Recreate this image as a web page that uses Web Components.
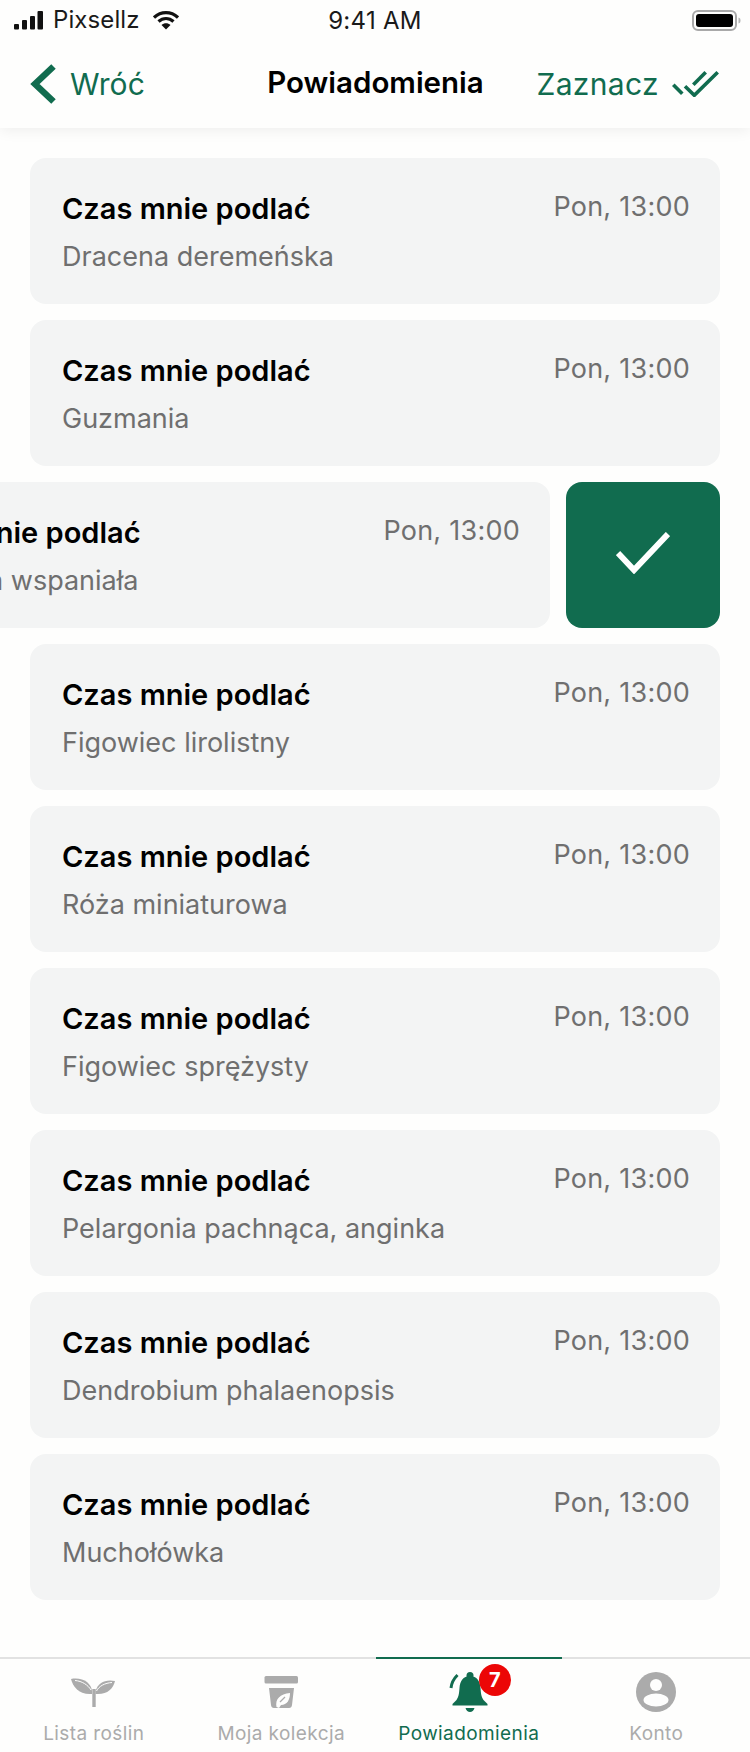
<!DOCTYPE html>
<html><head><meta charset="utf-8"><style>
html,body{margin:0;padding:0}
body{width:750px;height:1752px;overflow:hidden;background:#fefefd;font-family:Inter,sans-serif}
</style></head><body>
<app-screen>
<status-bar slot="top"></status-bar>
<nav-bar slot="top"></nav-bar>
<notice-card name="Dracena deremeńska"></notice-card>
<notice-card name="Guzmania"></notice-card>
<notice-card name="Bromelia wspaniała" swiped></notice-card>
<notice-card name="Figowiec lirolistny"></notice-card>
<notice-card name="Róża miniaturowa"></notice-card>
<notice-card name="Figowiec sprężysty"></notice-card>
<notice-card name="Pelargonia pachnąca, anginka"></notice-card>
<notice-card name="Dendrobium phalaenopsis"></notice-card>
<notice-card name="Muchołówka"></notice-card>
<tab-bar slot="bottom"></tab-bar>
</app-screen>
<script>
function def(name,html,init){customElements.define(name,class extends HTMLElement{constructor(){super();this.attachShadow({mode:'open'}).innerHTML=html;}connectedCallback(){if(init)init.call(this,this.shadowRoot);}});}
const G='#116c4f',GR='#ababab',BG='#fefefd';
def('app-screen',`<style>
:host{display:flex;flex-direction:column;width:750px;height:1752px;overflow:hidden}
header{flex:none;height:128px;box-shadow:0 2px 14px rgba(0,0,0,.07);position:relative;z-index:1;background:${BG}}
main{flex:1;display:flex;flex-direction:column;gap:16px;padding:30px 30px 0;min-height:0}
</style><header><slot name="top"></slot></header><main><slot></slot></main><slot name="bottom"></slot>`);
def('status-bar',`<style>
:host{display:flex;align-items:center;height:40px;position:relative;font:400 24px/40px Inter,sans-serif;color:#1a1a1a;letter-spacing:.1px}
.l{display:flex;align-items:center;padding-left:14px;gap:9px}
.t{position:absolute;left:0;right:0;text-align:center;top:1px;letter-spacing:.3px}
svg{display:block}
.b{position:absolute;left:692px;top:10px}
</style><div class="l">
<svg width="30" height="20" viewBox="0 0 30 20"><rect x="0" y="14" width="5" height="5.500" rx="1" fill="#111"/><rect x="8" y="10" width="5" height="9.500" rx="1" fill="#111"/><rect x="16" y="6" width="5" height="13.500" rx="1" fill="#111"/><rect x="23.500" y="1" width="5.500" height="18.500" rx="1" fill="#111"/></svg>
<span>Pixsellz</span>
<svg width="26" height="20" viewBox="0 0 26 20" style="margin-left:4px" fill="none" stroke="#111" stroke-width="3.2"><path d="M1 7.500C8 1 18 1 25 7.500"/><path d="M5.500 11.500C10 7.500 16 7.500 20.500 11.500"/><path d="M13 19.500L8.500 15C11 12.700 15 12.700 17.500 15Z" fill="#111" stroke="none"/></svg>
</div><div class="t">9:41 AM</div>
<svg class="b" width="50" height="22" viewBox="0 0 50 22"><rect x="1" y="1" width="43" height="19" rx="5" fill="none" stroke="#a9a9a9" stroke-width="2"/><rect x="4" y="4" width="37" height="13" rx="3" fill="#000"/><path d="M46.500 7.500c1.500.3 2 1.500 2 3s-.5 2.700-2 3z" fill="#b5b5b5"/></svg>`);
def('nav-bar',`<style>
:host{display:block;height:88px;position:relative;font-family:Inter,sans-serif}
.row{display:grid;grid-template-columns:1fr auto 1fr;align-items:center;height:88px;padding:0 30px}
.back{display:flex;align-items:center;gap:14px;color:${G};font-size:30px;line-height:40px;letter-spacing:.1px}
.title{font-size:29.500px;font-weight:600;color:#000;margin-top:-4px;padding-left:1px}
.sel{display:flex;align-items:center;justify-content:flex-end;gap:13px;color:${G};font-size:30px;letter-spacing:.35px;padding-right:1px}
svg{display:block}
</style><div class="row"><div class="back"><svg width="26" height="40" viewBox="0 0 26 40" fill="none" stroke="${G}" stroke-width="6.500"><path d="M23.500 2.500L5 20l18.500 17.500"/></svg><span>Wróć</span></div>
<div class="title">Powiadomienia</div>
<div class="sel"><span>Zaznacz</span><svg width="47" height="26" viewBox="0 0 47 26" fill="none" stroke="${G}" stroke-width="3.600"><path d="M1.300 13.700l9 9"/><path d="M13 15.300l9.300 9L45.700 1.300"/><path d="M21.300 13.700L33.700 1.300"/></svg></div></div>`);
def('notice-card',`<style>
:host{display:block;flex:none;height:146px;width:690px;position:relative}
.card{box-sizing:border-box;height:146px;background:#f3f4f4;border-radius:16px;padding:34px 30px 0 32px;position:relative;display:flex;flex-direction:column;width:690px}
.top{display:flex;justify-content:space-between}
.t{font-size:29px;line-height:34px;font-weight:600;color:#000;white-space:nowrap}
.w{font-size:27px;line-height:34px;color:#6f6f6f;margin-top:-2px;letter-spacing:.25px;white-space:nowrap}
.n{font-size:27px;line-height:34px;color:#6f6f6f;margin-top:14px;white-space:nowrap}
.btn{position:absolute;left:536px;top:0;width:154px;height:146px;box-sizing:border-box;padding-bottom:4px;background:${G};border-radius:16px;display:none;place-items:center}
:host([swiped]) .card{transform:translateX(-170px)}
:host([swiped]) .btn{display:grid}
</style><div class="card"><div class="top"><span class="t">Czas mnie podlać</span><span class="w">Pon, 13:00</span></div><span class="n"></span></div>
<div class="btn"><svg width="54" height="42" viewBox="0 0 54 42" fill="none" stroke="#fff" stroke-width="6"><path d="M2 21l16 17L52 2"/></svg></div>`,function(r){r.querySelector('.n').textContent=this.getAttribute('name');});
def('tab-bar',`<style>
:host{display:grid;grid-template-columns:repeat(4,1fr);flex:none;height:95px;box-sizing:border-box;border-top:2px solid #e2e2e2;position:relative;background:${BG};font-family:Inter,sans-serif}
.i{display:flex;flex-direction:column;align-items:center;position:relative;font-size:19px;line-height:24px;color:${GR};letter-spacing:.4px}
.ic{height:46px;margin-top:15px;display:flex;align-items:flex-start;position:relative}
.lbl{margin-top:2px}
.on{color:${G}}
.on::before{content:"";position:absolute;left:1px;width:186px;top:-2px;height:2px;background:${G}}
svg{display:block}
.badge{position:absolute;left:30px;top:-10px;width:32px;height:32px;border-radius:50%;background:#ec0606;color:#fff;font:700 20px/32px Inter,sans-serif;text-align:center;letter-spacing:0}
</style>
<div class="i"><div class="ic"><svg width="46" height="32" viewBox="0 0 46 32" fill="${GR}" style="margin-top:3px"><path d="M0 2C12 0 20 6 21 14v3C8 18 2 10 0 2z"/><path d="M44 4C34 2 27 6 24.500 14v3C36 18 42 12 44 4z"/><rect x="21.300" y="12" width="3.400" height="18"/><path d="M4 3.500C11 4 17 8 20 13" fill="none" stroke="${BG}" stroke-width="1"/><path d="M41 5.500C34 6 28 9 25.500 14" fill="none" stroke="${BG}" stroke-width="1"/></svg></div><div class="lbl">Lista roślin</div></div>
<div class="i"><div class="ic"><svg width="34" height="32" viewBox="0 0 34 32" style="margin-top:2px"><rect x=".5" width="33.500" height="7.500" rx="1.500" fill="${GR}"/><path d="M5 12H30L28 29q-.3 3-3 3H10q-2.700 0-3-3z" fill="${GR}"/><path d="M12.500 31C11 23 16 18 26 17C26 24 23 29 17 29L15 32z" fill="${BG}"/><path d="M16 26l5-5" stroke="${GR}" stroke-width="1.200"/></svg></div><div class="lbl">Moja kolekcja</div></div>
<div class="i on"><div class="ic"><svg width="40" height="42" viewBox="0 0 40 42" fill="${G}" style="margin-top:-2px"><circle cx="21" cy="3.500" r="3.500"/><path d="M21 4c-7 0-10 5-10.500 12-.4 6-1 9-3 12l-4 4v1.500h35V32l-4-4c-2-3-2.600-6-3-12C31 9 28 4 21 4z"/><path d="M16.500 36h9c-.8 2.800-2.300 4-4.500 4s-3.700-1.200-4.500-4z"/><path d="M2 16C2.500 11 4.500 7 8.500 3" fill="none" stroke="${G}" stroke-width="3"/></svg><span class="badge">7</span></div><div class="lbl">Powiadomienia</div></div>
<div class="i"><div class="ic"><svg width="40" height="40" viewBox="0 0 40 40" style="margin-top:-2px"><circle cx="20" cy="20" r="20" fill="${GR}"/><circle cx="20" cy="13" r="6" fill="${BG}"/><ellipse cx="20" cy="28" rx="12.500" ry="6.500" fill="${BG}"/></svg></div><div class="lbl">Konto</div></div>`);
</script></body></html>
